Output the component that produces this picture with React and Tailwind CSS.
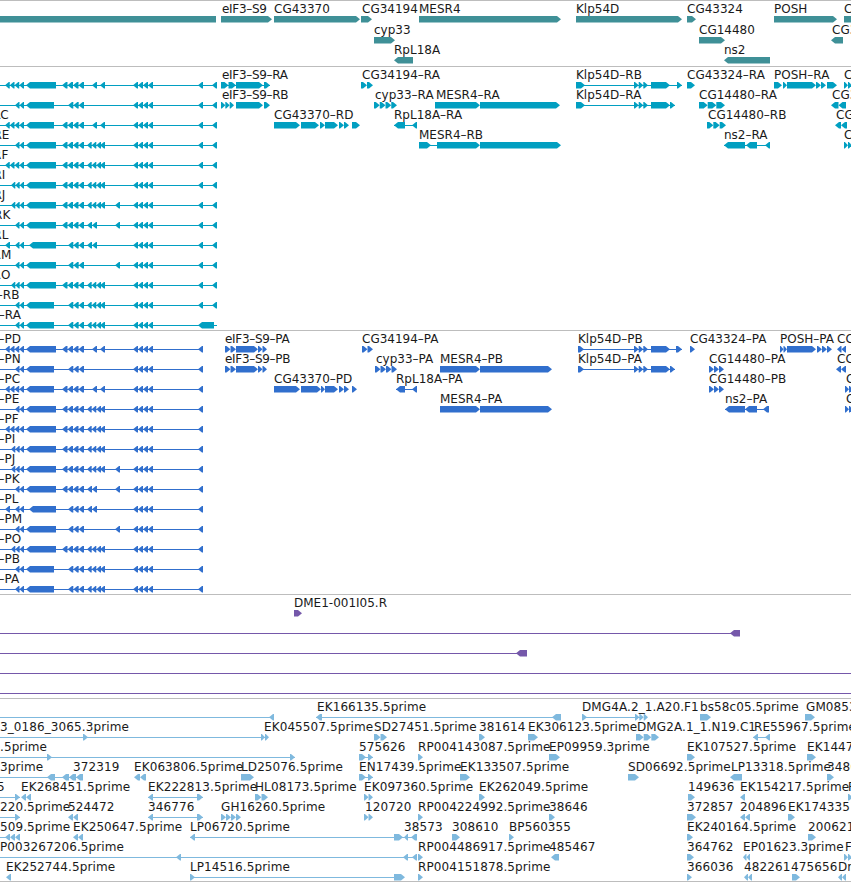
import React from "react";

const R = 1;
const L = -1;

// n arrows sitting side by side between a and b
const arrows = (a, b, n, d) =>
  Array.from({ length: n }, (_, i) => [a + ((b - a) * i) / n, a + ((b - a) * (i + 1)) / n, d]);

const COLORS = {
  gene: "#3f9097",
  rna: "#019fc1",
  prot: "#316fcd",
  est: "#7fb9de",
  bac: "#7558aa",
};

// exon pieces of the long gene on the left, one list per isoform
const LEFT_A = arrows(5, 24, 4, L);
const LEFT_B = arrows(15, 24, 2, L);
const LEFT_C = arrows(11, 24, 3, L);
const MID = arrows(62, 84, 4, L);
const MID_S = arrows(68, 84, 3, L);
const LATE = arrows(133, 153, 4, L);
const A92 = [[92, 97, L], [100, 105, L]];
const A87 = arrows(87, 101, 3, L).concat([[100, 105, L]]);
const A87S = arrows(87, 97, 2, L);

const isoforms = [
  { tag: "D", e: [...LEFT_A, [26, 56, L], ...MID, ...A92, ...LATE] },
  { tag: "N", e: [...LEFT_B, [26, 54, L], ...MID_S, ...LATE] },
  { tag: "C", e: [...LEFT_A, [26, 54, L], ...MID, ...A92, ...LATE] },
  { tag: "E", e: [...LEFT_B, [26, 56, L], ...MID, ...A87, ...LATE] },
  { tag: "F", e: [...LEFT_A, [26, 56, L], ...MID, ...A87, ...LATE] },
  { tag: "I", e: [...LEFT_C, [26, 56, L], ...MID, ...A87, ...LATE] },
  { tag: "J", e: [...LEFT_C, [26, 56, L], ...MID, ...A87, [115, 120, L], ...LATE] },
  { tag: "K", e: [...LEFT_B, [26, 56, L], ...MID, ...A87S, [115, 120, L], ...LATE] },
  { tag: "L", e: [[5, 10, L], ...LEFT_B, [29, 56, L], ...MID_S, ...A87S, ...LATE] },
  { tag: "M", e: [...LEFT_B, [26, 56, L], ...MID_S, [115, 120, L], ...LATE] },
  { tag: "O", e: [...LEFT_C, [26, 56, L], ...MID, ...A87, ...LATE] },
  { tag: "B", e: [...LEFT_B, [26, 54, L], ...MID_S, ...A87, ...LATE] },
  { tag: "A", e: [...LEFT_B, [26, 54, L], ...MID_S, ...A87, ...LATE] },
];

// where the clipped label of each RNA isoform starts (only its tail is on screen)
const rnaX = { C: -13.4, E: -12.6, F: -12.9, I: -12.5, J: -12.5, K: -11.9, L: -12.7, M: -13.4, O: -13.4, B: -3.2, A: -1.2 };

const rnaLeft = isoforms.map((iso, i) => ({
  label: iso.tag in rnaX ? `-R${iso.tag}` : null,
  x: rnaX[iso.tag] || 0,
  line: [0, 217],
  e: [...iso.e, ...(i === 12 ? [[198, 214, L]] : [[198, 203, L], [212, 217, L]])],
}));

const protLeft = isoforms.map((iso) => ({
  label: `-P${iso.tag}`,
  x: -1.5,
  line: [0, 203],
  e: [...iso.e, [198, 203, L]],
}));

const geneRows = [
  [
    { e: [[0, 216, 0]] },
    { label: "eIF3-S9", x: 222, e: [[221, 272, R]] },
    { label: "CG43370", x: 274, e: [[274, 360, R]] },
    { label: "CG34194", x: 362, e: [[361, 372, R]] },
    { label: "MESR4", x: 419, e: [[419, 561, R]] },
    { label: "Klp54D", x: 576, e: [[576, 682, R]] },
    { label: "CG43324", x: 687, e: [[687, 696, R]] },
    { label: "POSH", x: 774, e: [[774, 837, R]] },
    { label: "CG32500", x: 844, e: [[844, 860, R]] },
  ],
  [
    { label: "cyp33", x: 374, e: [[374, 395, R]] },
    { label: "CG14480", x: 699, e: [[699, 725, R]] },
    { label: "CG32", x: 832, e: [[831, 843, L]] },
  ],
  [
    { label: "RpL18A", x: 394, e: [[394, 413, L]] },
    { label: "ns2", x: 724, e: [[724, 770, L]] },
  ],
];

const rnaRight = [
  [
    { label: "eIF3-S9-RA", x: 222, line: [221, 270], e: [...arrows(221, 236, 2, R), [236, 263, R], [264, 270, R]] },
    { label: "CG34194-RA", x: 362, e: arrows(361, 373, 2, R) },
    { label: "Klp54D-RB", x: 576, line: [576, 682], e: [[576, 585, R], ...arrows(634, 648, 3, R), [651, 670, R], [677, 682, R]] },
    { label: "CG43324-RA", x: 687, e: [[687, 695, R]] },
    { label: "POSH-RA", x: 774, e: [[774, 782, R], [783, 787, R], [787, 816, R], ...arrows(816, 826, 2, R), [827, 837, R]] },
    { label: "CG32500-RA", x: 844, e: arrows(844, 852, 2, R) },
  ],
  [
    { label: "eIF3-S9-RB", x: 222, e: [...arrows(221, 234, 3, R), [236, 263, R], [264, 270, R]] },
    { label: "cyp33-RA", x: 375, e: arrows(374, 397, 4, R) },
    { label: "MESR4-RA", x: 436, e: [[435, 480, R], [480, 560, R]] },
    { label: "Klp54D-RA", x: 576, line: [576, 675], e: [[576, 585, R], ...arrows(634, 648, 3, R), [651, 670, R], [670, 675, R]] },
    { label: "CG14480-RA", x: 699, e: arrows(699, 725, 3, R) },
    { label: "CG32", x: 832, e: arrows(831, 846, 2, L) },
  ],
  [
    { label: "CG43370-RD", x: 274, e: [[274, 300, R], [301, 319, R], [320, 325, R], [325, 338, R], ...arrows(339, 349, 2, R), [352, 360, R]] },
    { label: "RpL18A-RA", x: 394, line: [394, 417], e: [[394, 405, L], [412, 417, L]] },
    { label: "CG14480-RB", x: 708, e: arrows(707, 726, 3, R) },
    { label: "CG32", x: 836, e: arrows(835, 847, 2, L) },
  ],
  [
    { label: "MESR4-RB", x: 419, line: [419, 440], e: [[419, 431, R], [437, 480, R], [480, 561, R]] },
    { label: "ns2-RA", x: 724, line: [724, 770], e: [[724, 745, L], [746, 757, L], [765, 770, L]] },
    { label: "CG32500-RB", x: 844, e: arrows(844, 852, 2, R) },
  ],
];

const protRight = [
  [
    { label: "eIF3-S9-PA", x: 225, e: [...arrows(225, 236, 2, R), [236, 258, R], ...arrows(258, 267, 2, R)] },
    { label: "CG34194-PA", x: 362, e: arrows(362, 373, 2, R) },
    { label: "Klp54D-PB", x: 578, line: [578, 682], e: [[578, 584, R], ...arrows(634, 648, 3, R), [651, 670, R], [676, 682, R]] },
    { label: "CG43324-PA", x: 690, e: [[690, 695, R]] },
    { label: "POSH-PA", x: 780, e: [...arrows(780, 787, 2, R), [787, 816, R], ...arrows(817, 832, 3, R)] },
    { label: "CC", x: 837, e: arrows(837, 846, 2, L) },
  ],
  [
    { label: "eIF3-S9-PB", x: 225, e: [...arrows(225, 236, 2, R), [236, 258, R], ...arrows(258, 267, 2, R)] },
    { label: "cyp33-PA", x: 376, e: arrows(375, 397, 4, R) },
    { label: "MESR4-PB", x: 440, e: [[440, 480, R], [480, 552, R]] },
    { label: "Klp54D-PA", x: 578, line: [578, 675], e: [[578, 584, R], ...arrows(634, 648, 3, R), [651, 670, R], [670, 675, R]] },
    { label: "CG14480-PA", x: 709, e: arrows(709, 724, 3, R) },
    { label: "CC", x: 837, e: arrows(836, 846, 2, L) },
  ],
  [
    { label: "CG43370-PD", x: 274, e: [[274, 300, R], [301, 321, R], [321, 325, R], [325, 338, R], ...arrows(339, 349, 2, R), [352, 357, R]] },
    { label: "RpL18A-PA", x: 396, line: [396, 417], e: [[396, 405, L], [412, 417, L]] },
    { label: "CG14480-PB", x: 709, e: arrows(709, 724, 3, R) },
    { label: "C", x: 846, e: arrows(845, 853, 2, R) },
  ],
  [
    { label: "MESR4-PA", x: 440, e: [[440, 480, R], [480, 552, R]] },
    { label: "ns2-PA", x: 725, line: [725, 769], e: [[725, 745, L], [745, 757, L], [763, 769, L]] },
    { label: "C", x: 846, e: arrows(845, 853, 2, R) },
  ],
];

const bacRows = [
  [{ label: "DME1-001I05.R", x: 294, raw: true, e: [[294, 302, R]] }],
  [{ line: [0, 735], e: [[730, 740, L]] }],
  [{ line: [0, 520], e: [[516, 527, L]] }],
  [{ line: [0, 851], e: [] }],
  [{ line: [0, 851], e: [] }],
];

const estRows = [
  [
    { line: [0, 274], e: [[269, 274, L]] },
    { label: "EK166135.5prime", x: 317, line: [316, 560], e: [[316, 322, L], [552, 561, L]] },
    { label: "DMG4A.2_1.A20.F1", x: 582, line: [582, 640], e: [[582, 587, R], ...arrows(635, 648, 3, R)] },
    { label: "bs58c05.5prime", x: 700, e: [[700, 711, R]] },
    { label: "GM08534.5prime", x: 806, e: [[805, 815, R]] },
  ],
  [
    { label: "3_0186_3065.3prime", x: 0, line: [0, 265], e: [[83, 88, R], ...arrows(261, 269, 2, R)] },
    { label: "EK045507.5prime", x: 264, e: [] },
    { label: "SD27451.5prime", x: 374, e: arrows(374, 387, 2, R) },
    { label: "381614", x: 479, e: [[479, 485, R]] },
    { label: "EK306123.5prime", x: 528, e: [[528, 538, R]] },
    { label: "DMG2A.1_1.N19.C1", x: 637, e: arrows(636, 659, 3, R) },
    { label: "RE55967.5prime", x: 754, line: [753, 770], e: [[753, 758, L], [765, 770, L]] },
  ],
  [
    { label: ".5prime", x: 0, line: [0, 295], e: [[47, 52, R], [290, 295, R]] },
    { label: "575626", x: 359, line: [359, 373], e: [[359, 366, R], [368, 373, R]] },
    { label: "RP004143087.5prime", x: 418, e: [[418, 423, R]] },
    { label: "EP09959.3prime", x: 549, e: [[549, 560, R]] },
    { label: "EK107527.5prime", x: 687, e: [[687, 695, R]] },
    { label: "EK144712.5prime", x: 807, e: [[807, 816, R]] },
  ],
  [
    { label: "3prime", x: 0, line: [0, 83], e: [[47, 55, L], ...arrows(62, 83, 3, L)] },
    { label: "372319", x: 73, e: [] },
    { label: "EK063806.5prime", x: 134, e: arrows(134, 146, 2, L) },
    { label: "LD25076.5prime", x: 241, e: [[241, 254, R]] },
    { label: "EN17439.5prime", x: 359, line: [359, 373], e: [[359, 366, R], [368, 373, R]] },
    { label: "EK133507.5prime", x: 460, e: [[460, 470, R]] },
    { label: "SD06692.5prime", x: 628, e: [[628, 639, R]] },
    { label: "LP13318.5prime", x: 731, e: [[730, 742, L]] },
    { label: "34867", x: 827, e: [[827, 834, R]] },
  ],
  [
    { label: "5", x: -3, line: [0, 20], e: [[15, 20, R], ...arrows(21, 31, 2, L)] },
    { label: "EK268451.5prime", x: 21, e: [] },
    { label: "EK222813.5prime", x: 148, line: [148, 203], e: [[148, 153, L], [197, 203, R]] },
    { label: "HL08173.5prime", x: 255, e: arrows(255, 268, 2, R) },
    { label: "EK097360.5prime", x: 364, e: arrows(364, 373, 2, R) },
    { label: "EK262049.5prime", x: 479, e: [[479, 485, R]] },
    { label: "149636", x: 688, e: [[688, 695, R]] },
    { label: "EK154217.5prime", x: 740, e: [[740, 745, L]] },
    { label: "R", x: 848, e: [[848, 853, R]] },
  ],
  [
    { label: "220.5prime", x: 0, line: [0, 20], e: [[15, 20, R]] },
    { label: "524472", x: 68, e: arrows(68, 78, 2, L) },
    { label: "346776", x: 148, line: [148, 203], e: [[148, 153, L], [197, 203, R]] },
    { label: "GH16260.5prime", x: 221, e: arrows(221, 241, 4, R) },
    { label: "120720", x: 365, e: arrows(364, 373, 2, R) },
    { label: "RP004224992.5prime", x: 418, e: [[418, 423, R]] },
    { label: "38646", x: 549, e: [[549, 555, R]] },
    { label: "372857", x: 687, e: [[687, 696, R]] },
    { label: "204896", x: 740, e: arrows(740, 750, 2, L) },
    { label: "EK174335", x: 788, e: [[788, 795, R]] },
  ],
  [
    { label: "509.5prime", x: 0, line: [0, 10], e: arrows(5, 20, 3, L) },
    { label: "EK250647.5prime", x: 73, e: arrows(73, 83, 2, L) },
    { label: "LP06720.5prime", x: 190, line: [190, 416], e: [[190, 195, L], [394, 403, R], [404, 408, L], [411, 417, L]] },
    { label: "38573", x: 404, e: [] },
    { label: "308610", x: 452, e: [[452, 460, R]] },
    { label: "BP560355", x: 509, e: [[509, 514, R]] },
    { label: "EK240164.5prime", x: 687, e: [[687, 693, R]] },
    { label: "200621", x: 808, e: [[808, 816, R]] },
  ],
  [
    { label: "P003267206.5prime", x: 0, line: [0, 417], e: [[176, 181, L], [403, 408, L], [412, 417, L]] },
    { label: "RP004486917.5prime", x: 418, e: [[418, 423, R]] },
    { label: "485467", x: 549, e: [[551, 559, L]] },
    { label: "364762", x: 687, e: [[687, 694, R]] },
    { label: "EP01623.3prime", x: 743, e: arrows(743, 750, 2, L) },
    { label: "F", x: 845, e: arrows(844, 852, 2, R) },
  ],
  [
    { label: "EK252744.5prime", x: 6, e: [[6, 11, L]] },
    { label: "LP14516.5prime", x: 190, line: [190, 400], e: [[190, 195, R], [394, 405, R]] },
    { label: "RP004151878.5prime", x: 418, e: [[418, 423, R]] },
    { label: "366036", x: 687, e: [[687, 692, R]] },
    { label: "482261", x: 744, e: arrows(744, 752, 2, L) },
    { label: "475656", x: 791, e: [[792, 800, R]] },
    { label: "Dr", x: 838, e: arrows(838, 846, 2, L) },
  ],
];

const Exon = ({ x1, x2, dir, color }) => {
  const h = 3.25;
  const c = 15.25;
  const tip = Math.min(4, (x2 - x1) * 0.8);
  let points;
  if (dir === R) {
    points = `${x1},${c - h} ${x2 - tip},${c - h} ${x2},${c} ${x2 - tip},${c + h} ${x1},${c + h}`;
  } else if (dir === L) {
    points = `${x2},${c - h} ${x1 + tip},${c - h} ${x1},${c} ${x1 + tip},${c + h} ${x2},${c + h}`;
  } else {
    points = `${x1},${c - h} ${x2},${c - h} ${x2},${c + h} ${x1},${c + h}`;
  }
  return <polygon points={points} fill={color} />;
};

const Row = ({ features, color, className = "" }) => (
  <div className={`relative h-[20px] shrink-0 ${className}`}>
    <svg width="851" height="20" className="absolute left-0 top-0 overflow-visible">
      {features.map((f, i) => (
        <g key={i}>
          {f.line && <rect x={f.line[0]} y="15" width={f.line[1] - f.line[0]} height="1" fill={color} />}
          {f.e.map((e, j) => (
            <Exon key={j} x1={e[0]} x2={e[1]} dir={e[2]} color={color} />
          ))}
        </g>
      ))}
    </svg>
    {features
      .filter((f) => f.label)
      .map((f) => (
        <span
          key={f.label + f.x}
          className={`absolute top-[-2px] whitespace-nowrap text-[12px] leading-[14px] text-[#1a1a1a] ${
            f.label.startsWith("eIF3") ? "tracking-[-0.3px]" : ""
          }`}
          style={{ left: f.x }}
        >
          {/* the browser draws these names with a long dash */}
          {f.raw ? f.label : f.label.replace(/-/g, "\u2013")}
        </span>
      ))}
  </div>
);

const Track = ({ rows, color, className = "" }) => (
  <section className={`flex flex-col border-t border-[#bdbdbd] pt-[3px] ${className}`}>
    {rows.map((features, i) => (
      <Row key={i} features={features} color={color} />
    ))}
  </section>
);

const merge = (left, right) =>
  left.map((row, i) => [row, ...(right[i] || [])]);

export default function App() {
  return (
    <div className="relative h-[882px] w-[851px] overflow-hidden bg-white font-['DejaVu_Sans',sans-serif]">
      <section className="flex h-[66px] flex-col border-t border-[#bdbdbd] pt-[3px]">
        <Row features={geneRows[0]} color={COLORS.gene} className="mb-px" />
        <Row features={geneRows[1]} color={COLORS.gene} />
        <Row features={geneRows[2]} color={COLORS.gene} />
      </section>
      <Track rows={merge(rnaLeft, rnaRight)} color={COLORS.rna} className="h-[264px]" />
      <Track rows={merge(protLeft, protRight)} color={COLORS.prot} className="h-[264px]" />
      <Track rows={bacRows} color={COLORS.bac} className="h-[104px]" />
      <Track rows={estRows} color={COLORS.est} className="h-[184px] border-b tracking-[0.1px]" />
    </div>
  );
}
